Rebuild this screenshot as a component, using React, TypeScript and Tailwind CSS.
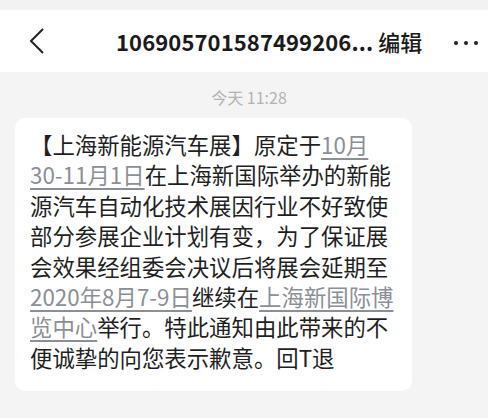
import React from "react";

const font = { fontFamily: '"Noto Sans CJK SC", "Noto Sans", sans-serif' };

const Link: React.FC<{ children: React.ReactNode }> = ({ children }) => (
  <span className="text-[#8b8f96] underline decoration-[1.5px] underline-offset-[4px]">
    {children}
  </span>
);

const lines: React.ReactNode[] = [
  <>【上海新能源汽车展】原定于<Link>10月</Link></>,
  <><Link>30-11月1日</Link>在上海新国际举办的新能</>,
  <>源汽车自动化技术展因行业不好致使</>,
  <>部分参展企业计划有变，为了保证展</>,
  <>会效果经组委会决议后将展会延期至</>,
  <><Link>2020年8月7-9日</Link>继续在<Link>上海新国际博</Link></>,
  <><Link>览中心</Link>举行。特此通知由此带来的不</>,
  <>便诚挚的向您表示歉意。回T退</>,
];

export default function App() {
  return (
    <div className="w-[488px] h-[418px] bg-[#f4f4f4] overflow-hidden" style={font}>
      <div className="h-[10px] bg-[#f2f2f2]" />
      <div className="h-[62px] bg-white flex items-center relative">
        <svg className="ml-[29px]" width="16" height="28" viewBox="0 0 16 28">
          <polyline points="14,2 2,14 14,26" fill="none" stroke="#222" strokeWidth="2" />
        </svg>
        <div className="ml-[71px] flex items-baseline text-[#1a1a1a]">
          <span className="text-[22px] font-bold tracking-[0.1px]">106905701587499206...</span>
          <span className="ml-[5px] text-[22px] font-medium">编辑</span>
        </div>
        <div className="absolute right-[10px] top-[31px] flex gap-[6px]">
          <span className="w-[4px] h-[4px] rounded-full bg-[#222]" />
          <span className="w-[4px] h-[4px] rounded-full bg-[#222]" />
          <span className="w-[4px] h-[4px] rounded-full bg-[#222]" />
        </div>
      </div>
      <div className="h-[46px] flex items-center justify-center pl-[10px] pt-[3px] text-[16px] text-[#b3b3b3]">
        今天 11:28
      </div>
      <div className="ml-[15px] w-[397px] bg-white rounded-[10px] pl-[15px] pt-[11px] pb-[19px] text-[22.4px] leading-[30.4px] text-[#1f1f1f]">
        {lines.map((l, i) => (
          <div key={i} className="whitespace-nowrap">{l}</div>
        ))}
      </div>
    </div>
  );
}
